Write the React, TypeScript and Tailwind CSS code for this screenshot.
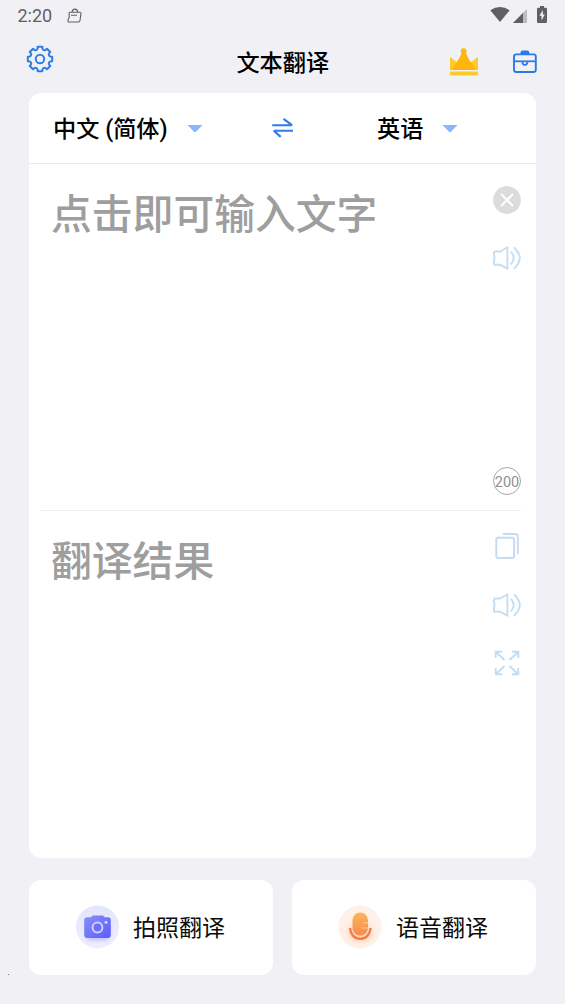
import type { ReactNode } from "react";

function GearIcon() {
  const teeth = 8;
  const pts: string[] = [];
  for (let i = 0; i < teeth; i++) {
    const a = (i * 360) / teeth - 90;
    const p = (deg: number, r: number) => {
      const t = (deg * Math.PI) / 180;
      return `${(14 + r * Math.cos(t)).toFixed(2)} ${(14 + r * Math.sin(t)).toFixed(2)}`;
    };
    pts.push(`${i === 0 ? "M" : "L"}${p(a - 11, 12.4)} L${p(a + 11, 12.4)} L${p(a + 14, 10.4)} Q${p(a + 22.5, 9)} ${p(a + 31, 10.4)}`);
  }
  return (
    <svg width="28" height="28" viewBox="0 0 28 28" fill="none" stroke="#2f7fe0" strokeWidth="2" strokeLinejoin="round">
      <path d={pts.join(" ") + "Z"} />
      <circle cx="14" cy="14" r="4.2" />
    </svg>
  );
}

function CrownIcon() {
  return (
    <svg width="30" height="28" viewBox="0 0 30 28">
      <path d="M1 9l8 6h12l8-6v13H1z" fill="#ffc928" />
      <circle cx="14.7" cy="3.2" r="2.9" fill="#fdb60d" />
      <path d="M13.3 4h3l3.2 6.500 7.500 11.500H3L10 10.500z" fill="#fdb60d" />
      <rect x="1" y="23.400" width="28" height="3.800" rx="1" fill="#ffc928" />
    </svg>
  );
}

function BriefcaseIcon() {
  return (
    <svg width="26" height="24" viewBox="0 0 26 24" fill="none" stroke="#2879e8" strokeWidth="1.900">
      <rect x="2" y="4.400" width="21.800" height="17.600" rx="2.200" />
      <path d="M9.400 4V2.700q0-1.200 1.200-1.200h4.600q1.200 0 1.200 1.200V4" />
      <path d="M9.500 3h7" />
      <path d="M2 11.300h21.800" strokeWidth="1.700" />
      <path d="M10.400 11.400v.9a2.500 2.500 0 005 0v-.9" strokeWidth="1.700" />
    </svg>
  );
}

function Caret() {
  return (
    <svg className="mt-px" width="16" height="8" viewBox="0 0 16 8">
      <path d="M.4 0h15.200L9 6.800q-1 .9-2 0z" fill="#8ab6fb" />
    </svg>
  );
}

function SwapIcon() {
  return (
    <svg width="22" height="20" viewBox="0 0 22 20" fill="none" stroke="#2f7bee" strokeWidth="2.100">
      <path d="M.2 7.200h19.800L11.500.9" strokeLinejoin="bevel" />
      <path d="M21 12.700H1.800L8.700 18.900" strokeLinejoin="bevel" />
    </svg>
  );
}

function ClearIcon() {
  return (
    <svg width="28" height="28" viewBox="0 0 28 28">
      <circle cx="14" cy="14" r="13.900" fill="#dcdcdc" />
      <path d="M8 8l12 12M20 8L8 20" stroke="#fff" strokeWidth="2" />
    </svg>
  );
}

function SpeakerIcon() {
  return (
    <svg width="28" height="24" viewBox="0 0 28 24" fill="none" stroke="#c4def2" strokeWidth="1.900" strokeLinejoin="round" strokeLinecap="round">
      <path d="M2 5.500h5.300L14.400 1.300v21.400L7.300 18.800H2q-1 0-1-1v-3.500q1-2.300 0-4.600V6.500q0-1 1-1z" />
      <path d="M18.200 6.200q5 5.800 0 11.600" />
      <path d="M21.500 2q10.500 10 0 20.200" />
    </svg>
  );
}

function CopyIcon() {
  return (
    <svg width="24" height="26" viewBox="0 0 24 26" fill="none" stroke="#c6daf3" strokeWidth="1.900" strokeLinecap="round">
      <rect x="1.300" y="4.800" width="17.800" height="20.200" rx="1.800" />
      <path d="M8.500 1h12q2.300 0 2.300 2.300V20.500" />
    </svg>
  );
}

function ExpandIcon() {
  return (
    <svg width="26" height="26" viewBox="0 0 26 26" fill="none" stroke="#c2ddf1" strokeWidth="1.900">
      <path d="M2 2l8.500 8M1.700 8V1.700h6.500" />
      <path d="M24 2l-8.500 8M24.300 8V1.700h-6.500" />
      <path d="M2 24l8.500-8M1.700 18v6.300h6.500" />
      <path d="M24 24l-8.500-8M24.300 18v6.300h-6.500" />
    </svg>
  );
}

function CameraBadge() {
  return (
    <svg className="-mt-px" width="44" height="44" viewBox="0 0 44 44">
      <defs>
        <linearGradient id="camBg" x1="0" y1="0" x2="0" y2="1">
          <stop offset="0" stopColor="#e3e5fc" />
          <stop offset="1" stopColor="#eeeefe" />
        </linearGradient>
        <linearGradient id="camBody" x1="0" y1="0" x2="1" y2="1">
          <stop offset="0" stopColor="#8890f5" />
          <stop offset="1" stopColor="#5c5cff" />
        </linearGradient>
        <filter id="camGlow" x="-30%" y="-30%" width="160%" height="160%">
          <feGaussianBlur stdDeviation="2" />
        </filter>
      </defs>
      <circle cx="22.500" cy="22" r="21.500" fill="url(#camBg)" />
      <rect x="12" y="17" width="22" height="18" rx="4" fill="#b9bbff" filter="url(#camGlow)" />
      <path d="M12 12.300h4l1.500-1.800h10.500l1.500 1.800h3.500q2.800 0 2.800 2.800v15q0 2.800-2.800 2.800h-21q-2.800 0-2.800-2.800v-15q0-2.800 2.800-2.800z" fill="url(#camBody)" />
      <circle cx="22.500" cy="22.500" r="4.900" fill="#6b6ef8" stroke="#cdd0ff" strokeWidth="2" />
      <circle cx="31" cy="17.300" r="1.500" fill="#d8daff" />
    </svg>
  );
}

function MicBadge() {
  return (
    <svg className="-mt-px" width="44" height="44" viewBox="0 0 44 44">
      <defs>
        <linearGradient id="micBody" x1="0" y1="0" x2="0" y2="1">
          <stop offset="0" stopColor="#fbb45c" />
          <stop offset="1" stopColor="#fa8b4c" />
        </linearGradient>
        <filter id="micGlow" x="-30%" y="-30%" width="160%" height="160%">
          <feGaussianBlur stdDeviation="2.500" />
        </filter>
      </defs>
      <circle cx="22" cy="22" r="21.500" fill="#fff0e8" />
      <ellipse cx="22" cy="27" rx="12" ry="10" fill="#ffd5bd" filter="url(#micGlow)" />
      <path d="M12 23c.5 6.500 4.500 10.800 10.300 10.800S32.100 29.500 32.600 23" fill="none" stroke="#f37a43" strokeWidth="2.300" />
      <rect x="14.500" y="7.500" width="15.500" height="23" rx="7.700" fill="url(#micBody)" />
      <path d="M25.500 17.800H30M23 23h7" stroke="#ffc595" strokeWidth="1.200" />
    </svg>
  );
}

function StatusBar() {
  return (
    <div className="flex h-8 items-center pl-[17.500px] pr-[18px] text-[#606064]">
      <span className="text-[18px] leading-8">2:20</span>
      <svg className="-mt-0.5 ml-[15px]" width="15" height="15" viewBox="0 0 15 15" fill="none" stroke="currentColor" strokeWidth="1.100" strokeLinejoin="round">
        <path d="M3 4.200h10q1.100 0 1 1.200L13 12.500q-.2 1.500-1.500 1.500H2.200Q.7 14 .9 12.600L2.300 8.500 2 5.200q0-1 1-1z" />
        <path d="M5 4.200q.3-3.100 2.900-3.100t2.800 3.100M4 7.300h6" />
      </svg>
      <div className="-mt-1 ml-auto flex items-center">
        <svg width="20" height="15" viewBox="0 0 20 15" fill="currentColor">
          <path d="M10 15L.3 3.300Q10-3.300 19.700 3.300z" />
        </svg>
        <svg className="ml-[3px] mt-[3px]" width="14" height="14" viewBox="0 0 14 14">
          <path d="M14 0v14H0z" fill="#bdbdc0" />
          <path d="M10 4v10H0z" fill="currentColor" />
        </svg>
        <svg className="ml-2.5" width="10" height="17" viewBox="0 0 10 17" fill="currentColor">
          <path d="M3 0h4v1.700h1.800q1.200 0 1.200 1.200V15.800q0 1.200-1.200 1.200H1.200Q0 17 0 15.800V2.900q0-1.200 1.200-1.200H3z" />
          <path d="M5.800 4L2.400 9.700h2.100V14.500L7.800 8.500H5.800z" fill="#f0f0f5" />
        </svg>
      </div>
    </div>
  );
}

function ActionCard({ icon, label }: { icon: ReactNode; label: string }) {
  return (
    <button className="flex h-[95px] w-[244px] items-center rounded-xl bg-white pl-[46px] text-[23px] text-[#0b0b0b]">
      {icon}
      <span className="ml-[14px] pt-0.5 leading-[34px]">{label}</span>
    </button>
  );
}

export default function App() {
  return (
    <div className="flex h-[1004px] w-[565px] flex-col overflow-hidden bg-[#f0f0f5] font-['Roboto','Noto_Sans_CJK_SC',sans-serif]">
      <StatusBar />
      <header className="grid h-[61px] grid-cols-[1fr_auto_1fr] items-center pb-0.5 pl-[26px] pr-[27px]">
        <div className="-mt-[5px]"><GearIcon /></div>
        <h1 className="pl-[1.500px] pt-0.5 text-[23.2px] font-medium leading-[34px] text-black">文本翻译</h1>
        <div className="flex items-center justify-end gap-[33px]">
          <CrownIcon />
          <BriefcaseIcon />
        </div>
      </header>

      <main className="ml-[29px] flex h-[765px] w-[507px] flex-col rounded-xl bg-white">
        <div className="flex h-[71px] items-center border-b border-[#ebebee] pl-6 text-[23.2px] font-medium text-black">
          <span className="w-[134px] whitespace-nowrap pt-0.5 leading-[34px]">中文 (简体)</span>
          <Caret />
          <div className="ml-[69px]"><SwapIcon /></div>
          <span className="ml-[83px] w-[65px] pt-0.5 leading-[34px]">英语</span>
          <Caret />
        </div>

        <section className="ml-3 mr-[15px] flex h-[347px] justify-between border-b border-[#ececee] pl-2.5">
          <p className="pt-[21px] text-[40.8px] font-medium leading-[60px] text-[#9e9e9e]">点击即可输入文字</p>
          <div className="flex flex-col items-center pb-[15px] pt-[22px]">
            <ClearIcon />
            <div className="mt-[32px]"><SpeakerIcon /></div>
            <span className="mt-auto flex size-7 items-center justify-center rounded-full border border-[#a8a8a8] pt-[3px] text-[14.500px] text-[#909090]">200</span>
          </div>
        </section>

        <section className="ml-3 mr-[15px] flex flex-1 justify-between pl-2.5">
          <p className="pt-[21px] text-[40.8px] font-medium leading-[60px] text-[#9e9e9e]">翻译结果</p>
          <div className="flex flex-col items-center pt-[22px]">
            <CopyIcon />
            <div className="mt-[34px]"><SpeakerIcon /></div>
            <div className="mt-[33px]"><ExpandIcon /></div>
          </div>
        </section>
      </main>

      <div className="ml-[29px] mt-[22px] flex gap-[19px]">
        <ActionCard icon={<CameraBadge />} label="拍照翻译" />
        <ActionCard icon={<MicBadge />} label="语音翻译" />
      </div>
      <div className="-mt-px ml-2 size-px bg-[#8c7474]" />
    </div>
  );
}
